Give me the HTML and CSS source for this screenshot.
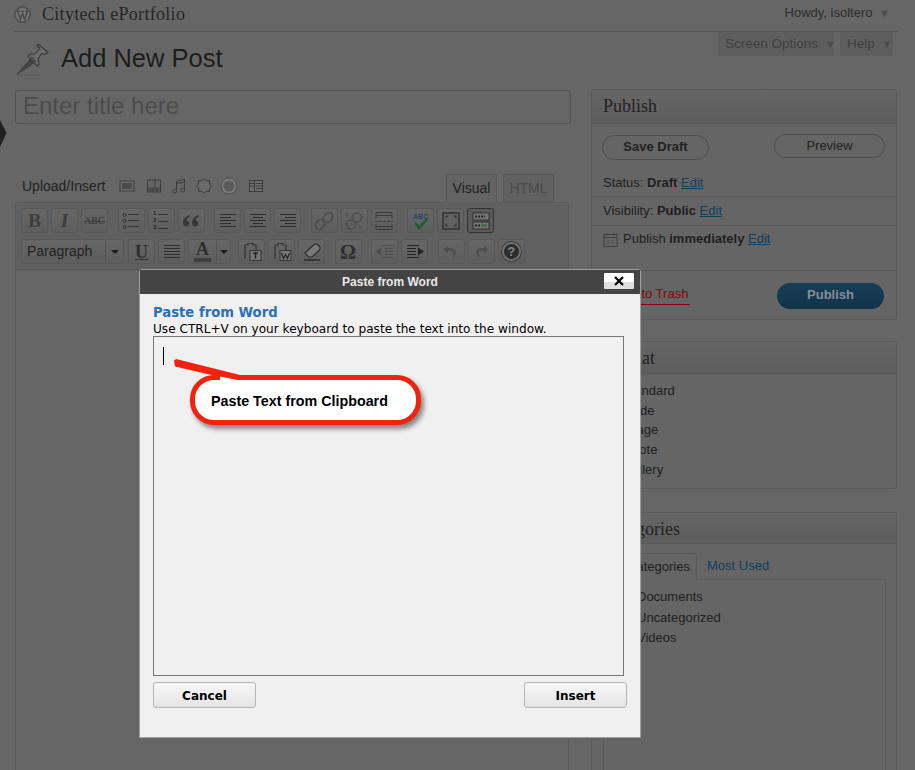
FILE: index.html
```html
<!DOCTYPE html>
<html lang="en">
<head>
<meta charset="utf-8">
<title>Add New Post</title>
<link rel="stylesheet" href="styles.css">
</head>
<body>
<svg class="edge-arrow" width="7" height="28" viewBox="0 0 7 28"><path d="M0 0 L6.5 13 L0 27 Z" fill="#222"/></svg>

<header class="topbar">
  <div class="brand">
    <svg class="wp-logo" width="17" height="17" viewBox="0 0 17 17"><circle cx="8.5" cy="8.5" r="8" fill="#555" stroke="#4f4f4f"/><circle cx="8.5" cy="8.5" r="6.6" fill="#787878"/><path d="M3.6 5.400 L6.300 13.500 L8.500 7.500 L10.700 13.500 L13.400 5.400 M2.800 5.200 H6.400 M7 5.200 H10 M11.200 5.200 H14" fill="none" stroke="#4a4a4a" stroke-width="1.500"/></svg>
    <span class="site-name">Citytech ePortfolio</span>
  </div>
  <div class="howdy">Howdy, isoltero <span class="caret">▼</span></div>
</header>

<div class="screen-tabs">
  <div class="screen-tab tab-options">Screen Options <span class="caret">▼</span></div>
  <div class="screen-tab tab-help">Help <span class="caret">▼</span></div>
</div>

<div class="page-head">
  <svg class="pin" width="34" height="34" viewBox="0 0 34 34"><path d="M2 32 H26" stroke="#585858" stroke-width="1"/><path d="M15 16 L2 31.500 L19 20 Z" fill="#444" stroke="#3a3a3a" stroke-width=".6"/><path d="M23 1 L33 9.500 L30 11.500 L26.500 10.500 L23 16 L24 21 L22 23 L13 13 L15 11 L20 11 L25 5.500 L22 3 Z" fill="#6c6c6c" stroke="#363636" stroke-width="1.100" stroke-linejoin="round"/><path d="M16 14 L21 19" stroke="#4c4c4c" stroke-width="2"/></svg>
  <h1 class="page-title">Add New Post</h1>
</div>

<div class="columns">
  <main class="main-col">
    <div class="title-input">Enter title here</div>
    <div class="editor-tools">
      <div class="media">
        <span class="media-label">Upload/Insert</span>
        <svg class="media-icon icon-image" width="16" height="16" viewBox="0 0 16 16"><rect x="1" y="3" width="14" height="10" fill="#6e6e6e" stroke="#3c3c3c"/><rect x="3" y="5" width="10" height="6" fill="#4c4c4c"/></svg>
        <svg class="media-icon" width="16" height="16" viewBox="0 0 16 16"><rect x="1.500" y="2" width="13" height="12" fill="none" stroke="#3c3c3c"/><path d="M1.500 10 H14.500 M1.500 12 H14.500 M9 2 V10" stroke="#3c3c3c"/><path d="M4 14 V10 M7 14 V10 M11 14 V10" stroke="#3c3c3c"/></svg>
        <svg class="media-icon" width="16" height="16" viewBox="0 0 16 16"><path d="M5.500 13 V3 L13.500 1.500 V11.500 M5.500 5.500 L13.500 4" fill="none" stroke="#3c3c3c"/><circle cx="3.800" cy="13" r="2" fill="none" stroke="#3c3c3c"/><circle cx="11.800" cy="12" r="2" fill="none" stroke="#3c3c3c"/></svg>
        <svg class="media-icon" width="16" height="16" viewBox="0 0 16 16"><path d="M8 .5 L10.200 2.800 L13.300 2.700 L13.400 5.800 L15.500 8 L13.400 10.200 L13.300 13.300 L10.200 13.200 L8 15.500 L5.800 13.200 L2.700 13.300 L2.600 10.200 L.5 8 L2.600 5.800 L2.700 2.700 L5.800 2.800 Z" fill="#6a6a6a" stroke="#3c3c3c" stroke-linejoin="round"/></svg>
        <svg class="media-icon media-disc" width="18" height="18" viewBox="0 0 18 18"><circle cx="9" cy="9" r="8" fill="#7c7c7c" stroke="#505050"/><circle cx="9" cy="9" r="5.500" fill="#5a5a5a"/></svg>
        <svg class="media-icon" width="16" height="16" viewBox="0 0 16 16"><rect x="1.500" y="2.500" width="13" height="11" fill="#6e6e6e" stroke="#3c3c3c"/><path d="M6.500 2.500 V13.500 M8 5.500 H14 M8 8 H14 M8 10.500 H14 M2 5.500 H6 M2 8 H6" stroke="#3c3c3c"/></svg>
      </div>
      <div class="editor-tabs">
        <div class="editor-tab is-active">Visual</div>
        <div class="editor-tab is-muted">HTML</div>
      </div>
    </div>
    <div class="editor">
      <div class="toolbar">
        <div class="tool-row">
          <div class="tool-group">
            <div class="tool"><span class="glyph-b">B</span></div>
            <div class="tool"><span class="glyph-i">I</span></div>
            <div class="tool"><span class="glyph-abc">ABC</span></div>
          </div>
          <div class="tool-group">
            <div class="tool"><svg width="20" height="20" viewBox="0 0 20 20"><g fill="none" stroke="#333"><circle cx="3.500" cy="4" r="1.500"/><circle cx="3.500" cy="10" r="1.500"/><circle cx="3.500" cy="16" r="1.500"/><path d="M7 3.500 H18 M7 9.500 H18 M7 15.500 H18"/></g></svg></div>
            <div class="tool"><span class="nums">1<br>2<br>3</span><svg width="12" height="20" viewBox="0 0 12 20"><path d="M1 3.500 H11 M1 10.500 H11 M1 17.500 H11" stroke="#333"/></svg></div>
            <div class="tool"><svg width="18" height="14" viewBox="0 0 18 14"><path d="M7 1 C3 2.500 1 5.500 1 8.500 C1 11 2.500 12.500 4.200 12.500 C6 12.500 7.200 11 7.200 9.300 C7.200 7.700 6 6.500 4.500 6.500 C4.700 5 5.800 3.500 8 2.500 Z M16 1 C12 2.500 10 5.500 10 8.500 C10 11 11.500 12.500 13.200 12.500 C15 12.500 16.200 11 16.200 9.300 C16.200 7.700 15 6.500 13.500 6.500 C13.700 5 14.800 3.500 17 2.500 Z" fill="#383838"/></svg></div>
          </div>
          <div class="tool-group">
            <div class="tool"><svg width="18" height="18" viewBox="0 0 18 18"><path d="M1 2.500 H17 M1 5.500 H12 M1 8.500 H17 M1 11.500 H12 M1 14.500 H17" stroke="#2c2c2c"/></svg></div>
            <div class="tool"><svg width="18" height="18" viewBox="0 0 18 18"><path d="M1 2.500 H17 M4 5.500 H14 M1 8.500 H17 M4 11.500 H14 M1 14.500 H17" stroke="#2c2c2c"/></svg></div>
            <div class="tool"><svg width="18" height="18" viewBox="0 0 18 18"><path d="M1 2.500 H17 M6 5.500 H17 M1 8.500 H17 M6 11.500 H17 M1 14.500 H17" stroke="#2c2c2c"/></svg></div>
          </div>
          <div class="tool-group">
            <div class="tool"><svg width="20" height="20" viewBox="0 0 20 20"><g fill="none" stroke="#4c4c4c" stroke-width="1.800"><rect x="10" y="1.500" width="8" height="10" rx="4" transform="rotate(45 14 6.500)"/><rect x="2" y="8.500" width="8" height="10" rx="4" transform="rotate(45 6 13.500)"/></g></svg></div>
            <div class="tool"><svg width="20" height="20" viewBox="0 0 20 20"><g fill="none" stroke="#4c4c4c" stroke-width="1.500"><circle cx="13" cy="6.500" r="4.500"/><circle cx="7" cy="13.500" r="4.500"/><path d="M2 2 L5 5 M15 15 L18 18 M5 2 L2 5 M18 15 L15 18" stroke-width="1"/></g></svg></div>
            <div class="tool"><svg width="20" height="20" viewBox="0 0 20 20"><g fill="none" stroke="#3c3c3c"><path d="M2 8 V1.500 H18 V8 M2 4.500 H18"/><path d="M2 13 V18.500 H18 V13 M2 15.500 H18"/><path d="M1 10.500 H19" stroke-dasharray="3 1"/></g></svg></div>
          </div>
          <div class="tool-group">
            <div class="tool"><svg width="20" height="20" viewBox="0 0 20 20"><text class="spell-text" x="2" y="8">ABC</text><path d="M4 12 L8 17 L17 7" fill="none" stroke="#14602a" stroke-width="2.400"/></svg></div>
            <div class="tool"><svg width="18" height="18" viewBox="0 0 18 18"><rect x="1" y="1" width="16" height="16" fill="none" stroke="#2e2e2e" stroke-width="1.400"/><path d="M3.500 3.500 L7 3.500 L3.500 7 Z M14.500 3.500 L11 3.500 L14.500 7 Z M3.500 14.500 L7 14.500 L3.500 11 Z M14.500 14.500 L11 14.500 L14.500 11 Z" fill="#3a3a3a"/></svg></div>
            <div class="tool is-on"><svg width="18" height="18" viewBox="0 0 18 18"><rect x="1" y="1" width="16" height="7" fill="#777" stroke="#2e2e2e"/><rect x="1" y="10" width="16" height="7" fill="#777" stroke="#2e2e2e"/><path d="M3 4.500 H13 M3 13.500 H8" stroke="#222" stroke-width="2" stroke-dasharray="2 1"/><path d="M9 13.500 H15" stroke="#2f6b45" stroke-width="2"/></svg></div>
          </div>
        </div>
        <div class="tool-row">
          <div class="tool-group">
            <div class="select"><span class="select-label">Paragraph</span><span class="select-arrow"><i class="down"></i></span></div>
          </div>
          <div class="tool-group row2-a">
            <div class="tool"><span class="glyph-u">U</span></div>
            <div class="tool"><svg width="18" height="18" viewBox="0 0 18 18"><path d="M1 2.500 H17 M1 5.500 H17 M1 8.500 H17 M1 11.500 H17 M1 14.500 H17" stroke="#2c2c2c"/></svg></div>
            <div class="tool tool-split"><span class="color-a"><span class="glyph-a">A</span><span class="color-bar"></span></span><span class="split-arrow"><i class="down"></i></span></div>
          </div>
          <div class="tool-group row2-b">
            <div class="tool"><svg width="20" height="20" viewBox="0 0 20 20"><path d="M3 17 V3 H6 V1.500 H11 V3 H14 V8" fill="none" stroke="#333" stroke-width="1.200"/><rect x="8" y="8.500" width="11" height="10" fill="#777" stroke="#333"/><path d="M11 11 H16 M13.500 11 V16.500" stroke="#222" stroke-width="1.600"/></svg></div>
            <div class="tool"><svg width="20" height="20" viewBox="0 0 20 20"><path d="M3 17 V3 H6 V1.500 H11 V3 H14 V8" fill="none" stroke="#333" stroke-width="1.200"/><rect x="8" y="8.500" width="11" height="10" fill="#777" stroke="#333"/><path d="M9.500 11 L11.500 16.500 L13.500 12.500 L15.500 16.500 L17.500 11" fill="none" stroke="#222" stroke-width="1.200"/></svg></div>
            <div class="tool"><svg width="20" height="20" viewBox="0 0 20 20"><path d="M3 11 L12 2.500 C13.500 1.500 14.500 1.500 16 3 L17.500 4.500 C18.500 6 18.500 7 17 8.500 L10 15 L6.500 15 Z" fill="#7a7a7a" stroke="#2c2c2c" stroke-width="1.200"/><path d="M2 18 H18" stroke="#2c2c2c" stroke-width="1.600"/></svg></div>
          </div>
          <div class="tool-group">
            <div class="tool"><span class="glyph-omega">Ω</span></div>
          </div>
          <div class="tool-group">
            <div class="tool"><svg width="20" height="18" viewBox="0 0 20 18"><path d="M7 2.500 H18 M10 5.500 H18 M10 8.500 H18 M10 11.500 H18 M7 14.500 H18" stroke="#4e4e4e"/><path d="M1 8.500 L6 4.500 V12.500 Z" fill="#4e4e4e"/></svg></div>
            <div class="tool"><svg width="20" height="18" viewBox="0 0 20 18"><path d="M2 2.500 H14 M2 5.500 H11 M2 8.500 H11 M2 11.500 H11 M2 14.500 H14" stroke="#222"/><path d="M19 8.500 L13 4.500 V12.500 Z" fill="#222"/></svg></div>
          </div>
          <div class="tool-group">
            <div class="tool"><svg width="18" height="18" viewBox="0 0 18 18"><path d="M6 3 L1.500 6.500 L6 10 V7.700 C10 7.400 12.500 9 11 15 C15 12 16 3.800 6 5 Z" fill="#4f4f4f"/></svg></div>
            <div class="tool"><svg width="18" height="18" viewBox="0 0 18 18"><path d="M12 3 L16.500 6.500 L12 10 V7.700 C8 7.400 5.500 9 7 15 C3 12 2 3.800 12 5 Z" fill="#4f4f4f"/></svg></div>
            <div class="tool"><span class="help-dot">?</span></div>
          </div>
        </div>
      </div>
    </div>
  </main>

  <aside class="side-col">
    <section class="box box-publish">
      <h2 class="box-title">Publish</h2>
      <div class="publish-actions">
        <div class="pill pill-save">Save Draft</div>
        <div class="pill pill-preview">Preview</div>
      </div>
      <div class="pub-row pub-status">Status: <b>Draft</b> <a class="link">Edit</a></div>
      <div class="pub-row pub-vis">Visibility: <b>Public</b> <a class="link">Edit</a></div>
      <div class="pub-row pub-time">
        <svg class="cal" width="15" height="15" viewBox="0 0 15 15"><rect x="1" y="2.500" width="13" height="12" fill="none" stroke="#3f3f3f"/><path d="M1 5.500 H14" stroke="#3f3f3f"/><path d="M4 1 V3.500 M11 1 V3.500" stroke="#3f3f3f"/><path d="M5 8 V12 M9 8 V12" stroke="#4a4a4a"/></svg>
        <span>Publish <b>immediately</b> <a class="link">Edit</a></span>
      </div>
      <div class="pub-foot">
        <a class="trash">Move to Trash</a>
        <div class="publish-btn">Publish</div>
      </div>
    </section>

    <section class="box box-format">
      <h2 class="box-title">Format</h2>
      <ul class="format-list">
        <li>Standard</li>
        <li>Aside</li>
        <li>Image</li>
        <li>Quote</li>
        <li>Gallery</li>
      </ul>
    </section>

    <section class="box box-cats">
      <h2 class="box-title">Categories</h2>
      <div class="cat-tabs">
        <div class="cat-tab">All Categories</div>
        <a class="cat-link">Most Used</a>
      </div>
      <ul class="cat-panel">
        <li>Documents</li>
        <li>Uncategorized</li>
        <li>Videos</li>
      </ul>
    </section>
  </aside>
</div>

<div class="dialog">
  <div class="dialog-head">
    <span class="dialog-title">Paste from Word</span>
    <span class="dialog-close"><svg width="10" height="10" viewBox="0 0 10 10"><path d="M1 1 L9 9 M9 1 L1 9" stroke="#000" stroke-width="2.200"/></svg></span>
  </div>
  <div class="dialog-body">
    <h3 class="dialog-heading">Paste from Word</h3>
    <p class="dialog-hint">Use CTRL+V on your keyboard to paste the text into the window.</p>
    <div class="paste-area"><span class="text-cursor"></span></div>
    <div class="dialog-actions">
      <div class="dlg-btn">Cancel</div>
      <div class="dlg-btn">Insert</div>
    </div>
  </div>
</div>

<div class="callout">Paste Text from Clipboard</div>
<svg class="callout-tail" width="90" height="30" viewBox="0 0 90 30"><path d="M1 1.500 L3 0 L67 16 L68 18 L47 18 L2 7.500 Z" fill="#f1230f"/><path d="M47 17.500 L47 21.500 L67 21.500 Z" fill="#fff"/></svg>
</body>
</html>
```
FILE: styles.css
```css
* { box-sizing: border-box; }

html, body {
  margin: 0;
  height: 770px;
  overflow: hidden;
}

body {
  position: relative;
  background: #666;
  color: #222;
  font-family: "Liberation Sans", Arial, sans-serif;
  font-size: 13px;
}

.edge-arrow {
  position: absolute;
  left: 0;
  top: 120px;
}

/* top bar */
.topbar {
  display: flex;
  justify-content: space-between;
  align-items: flex-start;
  height: 32px;
  margin: 0 17px 0 14px;
  padding: 5px 8px 0 0;
  border-bottom: 1px solid #585858;
}
.brand { display: flex; align-items: center; gap: 11px; }
.wp-logo { display: block; }
.site-name {
  font-family: "Liberation Serif", serif;
  font-size: 18px;
  letter-spacing: .3px;
  line-height: 19px;
  color: #262626;
}
.howdy {
  font-size: 13px;
  line-height: 16px;
  color: #2d2d2d;
  white-space: nowrap;
}
.caret {
  font-size: 11px;
  color: #4c4c4c;
  margin-left: 3px;
}

.screen-tabs {
  float: right;
  display: flex;
  gap: 6px;
  margin-right: 22px;
}
.screen-tab {
  height: 24px;
  padding: 4px 0 0 7px;
  background: #5e5e5e;
  color: #3f3f3f;
  font-size: 13.500px;
  line-height: 16px;
  border-radius: 0 0 3px 3px;
  white-space: nowrap;
}
.tab-options { width: 116px; }
.tab-help { width: 53px; }

/* heading */
.page-head {
  display: flex;
  align-items: flex-start;
  height: 58px;
  padding: 10px 0 0 15px;
}
.pin { display: block; margin-top: 1px; }
.page-title {
  margin: 0 0 0 12px;
  font-size: 25.500px;
  font-weight: 400;
  line-height: 32px;
  color: #1d1d1d;
}

/* columns */
.columns {
  display: flex;
  gap: 20px;
  padding-left: 15px;
}
.main-col { width: 556px; flex: none; }
.side-col { width: 306px; flex: none; margin-top: -1px; }

.title-input {
  height: 34px;
  padding-left: 7px;
  border: 1px solid #505050;
  border-radius: 3px;
  font-size: 24px;
  line-height: 30px;
  color: #4c4c4c;
}

.editor-tools {
  display: flex;
  justify-content: space-between;
  align-items: flex-end;
  height: 78px;
  padding: 0 17px 0 7px;
}
.media {
  display: flex;
  align-items: center;
  height: 20px;
  margin-bottom: 6px;
}
.media-label {
  font-size: 14px;
  line-height: 20px;
  color: #222;
  margin-right: 7px;
}
.media-icon { display: block; margin-right: 9px; flex: none; }
.icon-image { margin-left: 7px; margin-right: 11px; }
.media-disc { margin-left: -1px; margin-right: 10px; }

.editor-tabs { display: flex; gap: 6px; }
.editor-tab {
  width: 51px;
  height: 28px;
  border: 1px solid #5a5a5a;
  border-bottom: 0;
  border-radius: 3px 3px 0 0;
  text-align: center;
  font-size: 14px;
  line-height: 26px;
}
.is-active { background: #636363; color: #1f1f1f; height: 29px; margin-bottom: -1px; position: relative; }
.is-muted { color: #4a4a4a; background: #616161; }

.editor {
  width: 554px;
  height: 568px;
  border: 1px solid #585858;
  border-bottom: 0;
  border-radius: 3px 3px 0 0;
}
.toolbar {
  height: 67px;
  padding: 5px 0 0 5px;
  background: #606060;
  border-bottom: 1px solid #585858;
}
.tool-row {
  display: flex;
  gap: 9.600px;
  height: 31px;
  align-items: flex-start;
}
.tool-group { display: flex; gap: 3px; }
.tool {
  display: flex;
  align-items: center;
  justify-content: center;
  width: 27px;
  height: 25px;
  background: linear-gradient(#666, #5e5e5e);
  border: 1px solid #585858;
  border-radius: 3px;
  color: #2e2e2e;
}
.tool svg { display: block; flex: none; }
.is-on { border-color: #333; background: #5a5a5a; }

.glyph-b, .glyph-i, .glyph-u, .glyph-a {
  font-family: "Liberation Serif", serif;
  font-weight: 700;
  font-size: 19px;
  line-height: 20px;
  color: #3d3d3d;
}
.glyph-i { font-style: italic; }
.glyph-abc {
  font-family: "Liberation Serif", serif;
  font-weight: 700;
  font-size: 10px;
  color: #404040;
  text-decoration: line-through;
}
.glyph-u { font-size: 18px; text-decoration: underline; color: #2e2e2e; }
.nums {
  font-family: "Liberation Sans", sans-serif;
  font-weight: 700;
  font-size: 6px;
  line-height: 7px;
  color: #262626;
  flex: none;
  margin-right: 1px;
}
.glyph-omega {
  font-family: "Liberation Serif", serif;
  font-weight: 700;
  font-size: 20px;
  line-height: 20px;
  color: #2e2e2e;
}
.spell-text {
  font-family: "Liberation Sans", sans-serif;
  font-weight: 700;
  font-size: 7px;
  fill: #24466a;
}
.help-dot {
  display: block;
  width: 19px;
  height: 19px;
  border-radius: 50%;
  background: #2c2c2c;
  border: 2px solid #727272;
  box-shadow: 0 0 0 1px #3c3c3c;
  color: #858585;
  font-weight: 700;
  font-size: 13px;
  line-height: 15px;
  text-align: center;
}

.select {
  display: flex;
  width: 103px;
  height: 25px;
  background: linear-gradient(#666, #5e5e5e);
  border: 1px solid #585858;
  border-radius: 3px;
}
.select-label {
  flex: 1;
  padding-left: 5px;
  font-size: 14px;
  line-height: 23px;
  color: #1f1f1f;
}
.select-arrow {
  display: flex;
  align-items: center;
  justify-content: center;
  width: 18px;
  border-left: 1px solid #555;
}
.down {
  display: block;
  width: 0;
  height: 0;
  border: 4px solid transparent;
  border-top: 4px solid #1c1c1c;
  border-bottom: 0;
}
.row2-a { margin-left: -5.600px; }
.row2-b { margin-left: -2.600px; }
.tool-split { width: 43px; padding: 0; }
.color-a {
  flex: 1;
  display: flex;
  flex-direction: column;
  align-items: center;
  height: 100%;
}
.glyph-a { font-size: 18px; line-height: 17px; margin-top: 1px; color: #2e2e2e; }
.color-bar { width: 17px; height: 4px; background: #3f3f3f; }
.split-arrow {
  display: flex;
  align-items: center;
  justify-content: center;
  width: 14px;
  height: 100%;
  border-left: 1px solid #555;
}

/* side boxes */
.box {
  border: 1px solid #5a5a5a;
  border-radius: 3px;
  background: #656565;
}
.box-title {
  margin: 0;
  height: 34px;
  padding: 6px 11px 0;
  background: linear-gradient(#666, #5d5d5d);
  border-bottom: 1px solid #595959;
  font-family: "Liberation Serif", serif;
  font-size: 18px;
  font-weight: 400;
  line-height: 20px;
  color: #232323;
}
.box-publish { height: 231px; margin-bottom: 21px; }

.publish-actions {
  display: flex;
  justify-content: space-between;
  align-items: flex-start;
  height: 47px;
  padding: 10px 11px 0 10px;
}
.pill {
  border: 1px solid #4c4c4c;
  border-radius: 13px;
  text-align: center;
  font-size: 13px;
  line-height: 21px;
  color: #222;
}
.pill-save { width: 107px; height: 25px; margin-top: 1px; font-weight: 700; }
.pill-preview { width: 111px; height: 24px; }

.pub-row { padding-left: 11px; font-size: 13px; line-height: 18px; color: #1f1f1f; }
.pub-status { height: 26px; padding-top: 3px; border-bottom: 1px solid #5a5a5a; }
.pub-vis { height: 29px; padding-top: 5px; border-bottom: 1px solid #5a5a5a; }
.pub-time {
  display: flex;
  align-items: flex-start;
  gap: 5px;
  height: 45px;
  padding-top: 4px;
  border-bottom: 1px solid #5a5a5a;
}
.cal { display: block; margin-top: 2px; flex: none; }
.link { color: #113f5b; text-decoration: underline; }

.pub-foot {
  display: flex;
  justify-content: space-between;
  align-items: flex-start;
  padding: 12px 12px 0 14px;
}
.trash {
  margin-top: 4px;
  color: #7c0a0a;
  font-size: 13px;
  line-height: 14px;
  padding: 0 2px 3px 0;
  border-bottom: 1px solid #860606;
}
.publish-btn {
  width: 107px;
  height: 26px;
  border-radius: 13px;
  background: linear-gradient(#173f57, #113349);
  color: #848f97;
  font-weight: 700;
  font-size: 13px;
  line-height: 24px;
  text-align: center;
}

.box-format { height: 148px; margin-bottom: 23px; }
.box-format .box-title { height: 32px; }
.format-list, .cat-panel { list-style: none; margin: 0; padding: 0; }
.format-list { padding: 7px 0 0 30px; }
.format-list li { height: 19.700px; line-height: 19px; font-size: 13px; color: #1f1f1f; }

.box-cats { height: 258px; border-bottom: 0; border-radius: 3px 3px 0 0; }
.box-cats .box-title { height: 31px; }
.cat-tabs {
  display: flex;
  align-items: flex-end;
  height: 35px;
  padding: 9px 0 0 11px;
}
.cat-tab {
  width: 94px;
  height: 27px;
  margin-bottom: -1px;
  padding: 5px 0 0 5px;
  border: 1px solid #5a5a5a;
  border-bottom: 0;
  background: #656565;
  position: relative;
  border-radius: 3px 3px 0 0;
  font-size: 13px;
  line-height: 16px;
  color: #1f1f1f;
  white-space: nowrap;
}
.cat-link {
  margin-left: 10px;
  padding-bottom: 5px;
  color: #113f5b;
  font-size: 13px;
  line-height: 16px;
}
.cat-panel {
  width: 283px;
  height: 191px;
  margin-left: 11px;
  padding: 7px 0 0 33px;
  border: 1px solid #5a5a5a;
  border-bottom: 0;
}
.cat-panel li { height: 20.500px; line-height: 20px; font-size: 13px; color: #1f1f1f; }

/* dialog */
.dialog {
  position: absolute;
  left: 139px;
  top: 269px;
  width: 502px;
  height: 469px;
  background: #f0f0f0;
  border: 1px solid #a0a0a0;
  border-radius: 3px 3px 0 0;
}
.dialog-head {
  position: relative;
  display: flex;
  align-items: center;
  justify-content: center;
  height: 24px;
  background: #444;
}
.dialog-title {
  font-size: 12px;
  font-weight: 700;
  color: #e8e8e8;
}
.dialog-close {
  position: absolute;
  left: 464px;
  top: 3px;
  display: flex;
  align-items: center;
  justify-content: center;
  width: 30px;
  height: 16px;
  background: linear-gradient(#fff 55%, #e0e0e0 55%);
  border-radius: 1px;
}
.dialog-close svg { display: block; }
.dialog-body { padding: 11px 13px 0; }
.dialog-heading {
  margin: 0;
  font-family: "DejaVu Sans", Verdana, sans-serif;
  font-size: 13.200px;
  font-weight: 700;
  line-height: 15px;
  color: #2b6fb8;
}
.dialog-hint {
  margin: 2px 0 0;
  font-family: "DejaVu Sans", Verdana, sans-serif;
  font-size: 12.100px;
  line-height: 14px;
  color: #000;
  white-space: nowrap;
}
.paste-area {
  width: 471px;
  height: 340px;
  padding: 10px 0 0 9px;
  border: 1px solid #777;
  background: #f0f0f0;
}
.text-cursor { display: block; width: 1px; height: 18px; background: #000; }
.dialog-actions {
  display: flex;
  justify-content: space-between;
  margin-top: 6px;
}
.dlg-btn {
  width: 103px;
  height: 26px;
  background: linear-gradient(#f8f8f8, #e4e4e4);
  border: 1px solid #b4b4b4;
  border-radius: 3px;
  text-align: center;
  font-family: "DejaVu Sans", Verdana, sans-serif;
  font-size: 12px;
  font-weight: 700;
  line-height: 26px;
  color: #000;
}

/* annotation */
.callout {
  position: absolute;
  left: 190px;
  top: 375px;
  width: 231px;
  height: 50px;
  padding-left: 16px;
  background: #fff;
  border: 5px solid #f1230f;
  border-radius: 24px;
  box-shadow: 3px 4px 5px rgba(0, 0, 0, .45);
  font-size: 14.300px;
  font-weight: 700;
  line-height: 42px;
  color: #000;
}
.callout-tail {
  position: absolute;
  left: 173px;
  top: 359px;
}
```
